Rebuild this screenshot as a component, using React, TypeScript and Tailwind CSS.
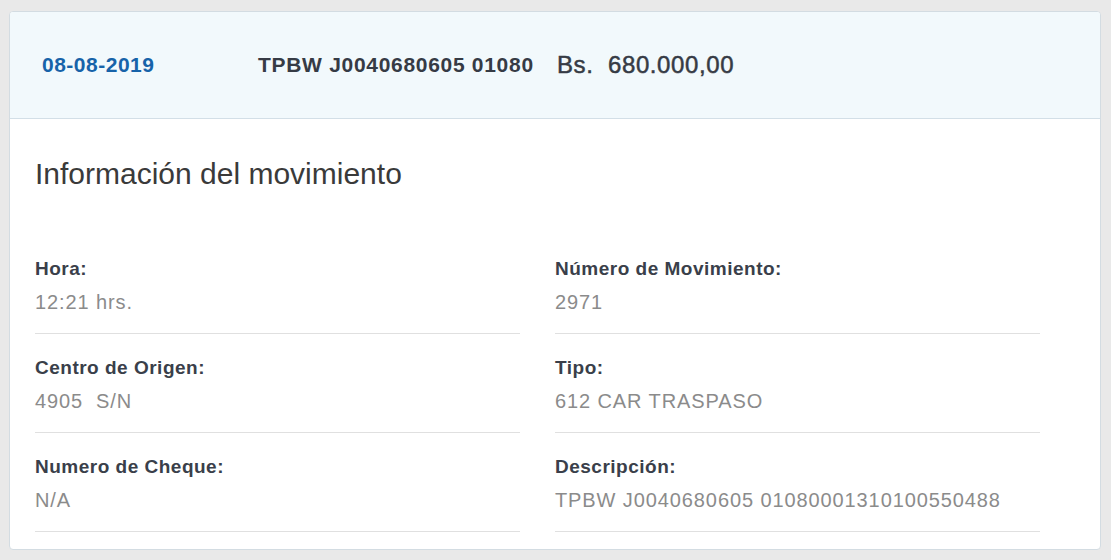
import React from "react";

const rows: [string, string, string, string][] = [
  ["Hora:", "12:21 hrs.", "Número de Movimiento:", "2971"],
  ["Centro de Origen:", "4905  S/N", "Tipo:", "612 CAR TRASPASO"],
  ["Numero de Cheque:", "N/A", "Descripción:", "TPBW J0040680605 01080001310100550488"],
];

function Field({ label, value }: { label: string; value: string }) {
  return (
    <div className="flex flex-col">
      <div className="h-[22px]" />
      <div className="text-[19px] leading-[24px] font-bold text-[#3a3f4a] tracking-[0.5px]">{label}</div>
      <div className="h-[9px]" />
      <div className="text-[20px] leading-[24px] text-[#8b8b8b] tracking-[0.9px] whitespace-pre">{value}</div>
      <div className="h-[19px]" />
      <div className="h-px bg-[#e0e0e0]" />
    </div>
  );
}

export default function App() {
  return (
    <div
      className="w-[1111px] h-[560px] bg-[#e9e9e9] pt-[11px] pl-[9px]"
      style={{ fontFamily: '"Liberation Sans", Arial, sans-serif' }}
    >
      <div className="w-[1092px] h-[539px] bg-white border border-[#d3dce2] rounded-[4px] overflow-hidden">
        <div className="h-[107px] bg-[#f2f9fc] border-b border-[#d3dfe7] flex items-center pl-[32px]">
          <div className="w-[216px] text-[21px] font-bold text-[#1763a9] tracking-[0.5px]">08-08-2019</div>
          <div className="w-[299px] text-[21px] font-bold text-[#363b45] tracking-[0.7px]">TPBW J0040680605 01080</div>
          <div className="text-[24px] text-[#363b45] whitespace-pre [-webkit-text-stroke:0.5px_#363b45] tracking-[0.6px]">Bs.  680.000,00</div>
        </div>
        <div className="pl-[25px]">
          <div className="pt-[38px] text-[30px] leading-[34px] text-[#3a3a3a] tracking-[0px]">Información del movimiento</div>
          <div className="h-[44px]" />
          <div className="grid grid-cols-[520px_520px]">
            {rows.map((r, i) => (
              <React.Fragment key={i}>
                <div className="pr-[35px]">
                  <Field label={r[0]} value={r[1]} />
                </div>
                <div className="pr-[35px]">
                  <Field label={r[2]} value={r[3]} />
                </div>
              </React.Fragment>
            ))}
          </div>
        </div>
      </div>
    </div>
  );
}
